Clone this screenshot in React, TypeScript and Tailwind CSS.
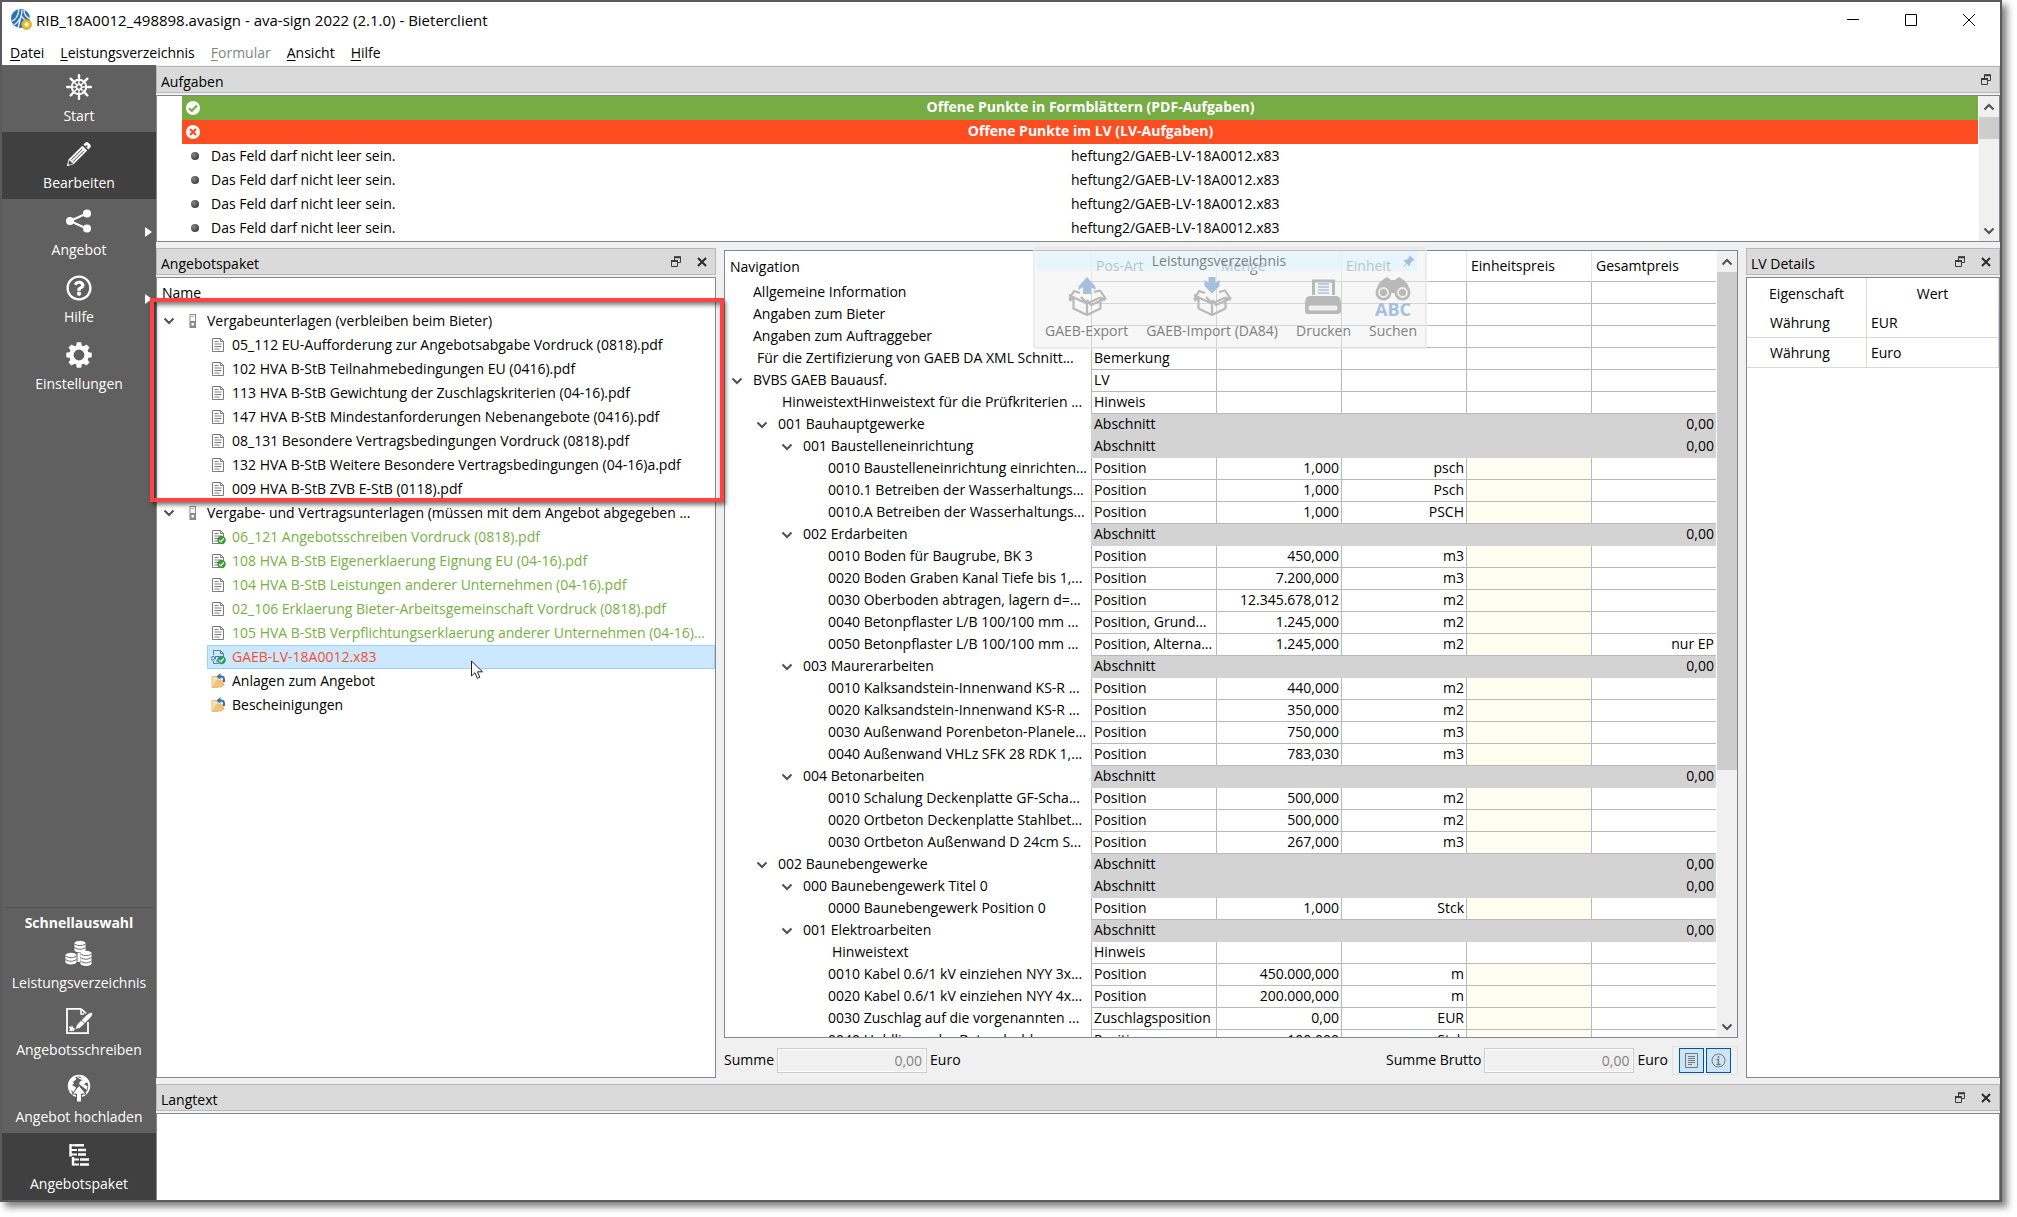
import type { ReactNode } from "react"
import { FaRegQuestionCircle } from "react-icons/fa"
import { BsPinAngleFill } from "react-icons/bs"

const ShipWheelIcon = () => (
    <svg width="26" height="26" viewBox="0 0 26 26" fill="none" stroke="white">
        <circle cx="13" cy="13" r="7.200" strokeWidth="2" />
        <circle cx="13" cy="13" r="2.600" strokeWidth="1.600" />
        {[0, 45, 90, 135, 180, 225, 270, 315].map((a) => (
            <g key={a} transform={`rotate(${a} 13 13)`}>
                <path d="M13 10.500V1" strokeWidth="1.400" />
                <path d="M13 4V1.200" strokeWidth="2.400" strokeLinecap="round" />
            </g>
        ))}
    </svg>
)

const PencilIcon = () => (
    <svg width="26" height="26" viewBox="0 0 26 26">
        <path d="M17.500 3.500l2-2q1.300-1 2.800.2l2 2q1.200 1.400 0 2.800l-2 2z" fill="white" />
        <path d="M16.300 4.700l4.900 4.900L7.500 23.200.8 25.200 2.600 18.400z" fill="white" />
        <path d="M16.300 8L5.200 19M18 9.700L6.900 20.800" stroke="#404040" strokeWidth="1" fill="none" />
        <path d="M3 19.500l1.500.4.600 1.500 1.600.3.200 1-3.600 1-.8-.8z" fill="#404040" />
        <circle cx="20.500" cy="5.200" r="1" fill="#404040" />
    </svg>
)

const ShareIcon = () => (
    <svg width="26" height="26" viewBox="0 0 26 26">
        <path d="M20.500 5.500L4 13l16.500 7.500" stroke="white" strokeWidth="2" fill="none" />
        <circle cx="4" cy="13" r="4" fill="white" />
        <circle cx="21" cy="5.500" r="4" fill="white" />
        <circle cx="21" cy="20.500" r="4" fill="white" />
    </svg>
)

const GearIcon = () => (
    <svg width="26" height="26" viewBox="0 0 26 26">
        <circle cx="13" cy="13" r="7.600" stroke="white" strokeWidth="4.400" fill="none" />
        {[0, 45, 90, 135, 180, 225, 270, 315].map((a) => (
            <path key={a} d="M10 4.500L10.800 0.300H15.200L16 4.500z" fill="white" transform={`rotate(${a} 13 13)`} />
        ))}
    </svg>
)

const CoinStack = ({ x, y, n }: { x: number; y: number; n: number }) => (
    <g>
        <rect x={x - 5.5} y={y} width="11" height={n * 3.6} fill="white" />
        <ellipse cx={x} cy={y + n * 3.6} rx="5.500" ry="2.200" fill="white" />
        <ellipse cx={x} cy={y} rx="5.500" ry="2.200" fill="white" />
        {Array.from({ length: n }, (_, i) => (
            <path key={i} d={`M${x - 5.5} ${y + i * 3.6 + 1}q5.500 3.400 11 0`} stroke="#606060" strokeWidth="0.900" fill="none" />
        ))}
    </g>
)

const CoinsIcon = () => (
    <svg width="28" height="28" viewBox="0 0 28 28">
        <CoinStack x={15} y={3} n={2} />
        <path d="M12.500 13h3v9h-3z" fill="white" />
        <CoinStack x={6} y={15} n={2} />
        <CoinStack x={21} y={13} n={3} />
    </svg>
)

const SignIcon = () => (
    <svg width="28" height="28" viewBox="0 0 28 28">
        <path d="M16 1.800H2v24.400h21V15M16 1.800l5 4.500" stroke="white" strokeWidth="1.800" fill="none" />
        <path d="M16 2v5h3" stroke="white" strokeWidth="1.500" fill="none" />
        <path d="M4.500 19.500l1.500 3 1-2.500 1.500 2.500 1-1M4.500 23.200h4.500" stroke="white" strokeWidth="1.600" fill="none" />
        <path d="M10.500 22.500q.5-5 3.500-7l8-8q2.500-2 4.500-2 1.300.5.800 2.500-.8 2-3 4l-7 7q-2.500 3-6.800 3.500z" fill="white" stroke="#606060" strokeWidth="0.600" />
        <path d="M16 13l4.500 4" stroke="#606060" strokeWidth="0.900" />
    </svg>
)

const GlobeUpIcon = () => (
    <svg width="26" height="28" viewBox="0 0 26 28">
        <circle cx="13" cy="12" r="10.300" stroke="white" strokeWidth="1.800" fill="none" />
        <path d="M11 2.500l3 1.500 2-1q5 1.500 6.500 6l-2.500-.5-2 2 3.500 1.500-.5 4-4-3-4-3 1-2.500 2.500-1.500-3-1-2-1.500zM3 12q0-6 6-9l1.500 2L7 8l1 1.500-2 1.500 4 2.500-2 4.500-3-1.500q-2-2-2-4.500z" fill="white" />
        <path d="M13 11.500l7 8.500h-4.500v8h-5v-8H6z" fill="white" stroke="#606060" strokeWidth="1" />
    </svg>
)

const TreeIcon = () => (
    <svg width="22" height="24" viewBox="0 0 22 24" stroke="white" fill="none" strokeWidth="2.600">
        <path d="M2.500 1v12.500M5 14v8.500" strokeWidth="2.400" />
        <path d="M3 2.300h4M3 11.500h6M3 7h6M5 16.500h6M5 21.500h6" strokeWidth="2" />
        <path d="M7 2.300h9M10 7h8M10 11.500h8M12 16.500h9M12 21.500h9" />
    </svg>
)

const AppLogo = () => (
    <svg width="22" height="22" viewBox="0 0 22 22">
        <circle cx="9.500" cy="9.500" r="9.500" fill="#2f6fb4" />
        <path d="M1 12Q7 10 8 0M3 16Q11 11 11 1M7 19Q9 12 10 7L18 15M13 1q0 6 6 9" stroke="#dcecf8" strokeWidth="1.400" fill="none" />
        <circle cx="15.500" cy="15.500" r="4.800" fill="#e8c02c" stroke="#c99b12" />
        <circle cx="15.500" cy="15.500" r="2" fill="#fffbe6" />
    </svg>
)

const DeviceIcon = () => (
    <svg width="8" height="14" viewBox="0 0 8 14" className="shrink-0">
        <rect x="1" y="0.500" width="5.500" height="13" fill="white" stroke="#8a8a8a" />
        <path d="M1 7h5.500v6.500H1z" fill="#8a8a8a" />
        <path d="M2 2.500h3.500" stroke="#e0b060" />
        <rect x="2.500" y="9" width="2.500" height="2.500" fill="white" />
    </svg>
)

const CheckBadge = ({ color }: { color: string }) => (
    <>
        <circle cx="10.500" cy="11" r="4.300" fill={color} />
        <path d="M8.200 11.200l1.700 1.700 2.800-3.500" stroke="white" strokeWidth="1.200" fill="none" />
    </>
)

const DocIcon = ({ checked }: { checked?: boolean }) => (
    <svg width="16" height="16" viewBox="0 0 16 16" className="shrink-0">
        <path d="M1.500 1.500h8l3 3v10h-11z" fill="white" stroke="#7c7c7c" />
        <path d="M9.500 1.500v3h3M3.500 4.500h4M3.500 7h7M3.500 9.500h7M3.500 12h5" stroke="#7c7c7c" fill="none" />
        {checked && <CheckBadge color="#3f9b35" />}
    </svg>
)

const GaebIcon = () => (
    <svg width="16" height="16" viewBox="0 0 16 16" className="shrink-0">
        <path d="M2.500 6V1.500h7l3 3V8M2.500 12v2.500h5" fill="none" stroke="#4f86ad" />
        <path d="M9.500 1.500v3h3M5 12h3M0 9.500q0-2 2-2t2 1.500-2 2-2-1.500M4.500 10V7.500h4" fill="none" stroke="#4a7496" />
        <CheckBadge color="#2f9a68" />
    </svg>
)

const FolderIcon = () => (
    <svg width="16" height="16" viewBox="0 0 16 16" className="shrink-0">
        <path d="M1 3.500h4.500L7 6v8.500H1z" fill="#f7e3b8" stroke="#dcae5c" strokeWidth="0.800" />
        <path d="M5 7h8v5.500l-2 2H1.500z" fill="#eec27a" />
        <path d="M7.500 3.500h2.500q3 0 3 3V9" fill="none" stroke="#3a6fb0" strokeWidth="2" />
        <path d="M9.500 0v7L5.500 3.500z" fill="#3a6fb0" />
    </svg>
)

const Chevron = ({ up }: { up?: boolean }) => (
    <svg width="12" height="8" viewBox="0 0 12 8" className="shrink-0">
        <path d={up ? "M1.500 6.500L6 2l4.500 4.500" : "M1.500 1.500L6 6l4.500-4.500"} stroke="#505050" strokeWidth="2" fill="none" />
    </svg>
)

const RestoreIcon = () => (
    <svg width="10" height="11" viewBox="0 0 10 11" fill="none" stroke="#3c3c3c">
        <path d="M3.500 4V1h6v5.500H7" />
        <path d="M3 1.200h7M0 5h7" strokeWidth="2" />
        <path d="M.5 5v5.500h6V5" />
    </svg>
)

const CloseIcon = () => (
    <svg width="10" height="10" viewBox="0 0 10 10">
        <path d="M1 1l8 8M9 1L1 9" stroke="#2c2c2c" strokeWidth="2" />
    </svg>
)

const BoxIcon = ({ out }: { out?: boolean }) => (
    <svg width="40" height="40" viewBox="0 0 40 40" fill="none">
        <path d="M6.500 20.500v11L20 38l13.500-6.500v-11M6.500 20.500L20 26.500l13.500-6M20 26.500V38M6.500 20.500L2.500 24M7 20l-5-2M33.500 20.500l5 2.500M20 26l-6-6M2 22.500l5-8.500 6 2M27 15l6-1.500 5.500 8L24 28l-4-5" stroke="#b9b9b9" strokeWidth="2.200" strokeLinejoin="round" />
        <path d={out ? "M20 0l8.500 9.500V13L24 10v7h-8v-7l-4.500 3V9.500z" : "M16.500 0v6l-4-3v6L20 16.500 27.500 9V3l-4 3V0z"} fill="#a5c0de" />
    </svg>
)

const PrinterIcon = () => (
    <svg width="38" height="36" viewBox="0 0 38 36">
        <path d="M9.500 16V2h20v14" stroke="#b9b9b9" strokeWidth="3" fill="#f4f4f4" />
        <path d="M14 5h11M14 8h11M14 11h11M14 14h11" stroke="#a5c0de" strokeWidth="1.600" />
        <path d="M1 24q0-7 5-7h26q5 0 5 7v8q0 3-3 3H4q-3 0-3-3z" fill="#b9b9b9" />
        <rect x="4.500" y="26.500" width="29" height="5" rx="2" fill="#efefef" />
    </svg>
)

const BinocularsIcon = () => (
    <svg width="36" height="24" viewBox="0 0 36 24">
        <path d="M1 16Q3 4 9 2l3-2 4 3h4l4-3 3 2q6 2 8 14z" fill="#b9b9b9" />
        <circle cx="8.500" cy="15.500" r="8" fill="#b9b9b9" />
        <circle cx="27.500" cy="15.500" r="8" fill="#b9b9b9" />
        <circle cx="8.500" cy="15.500" r="4.500" fill="none" stroke="#efefef" strokeWidth="1.800" />
        <circle cx="27.500" cy="15.500" r="4.500" fill="none" stroke="#efefef" strokeWidth="1.800" />
    </svg>
)

interface NavItemProps {
    icon: ReactNode
    label: string
    active?: boolean
    submenu?: boolean
}

const NavItem = ({ icon, label, active, submenu }: NavItemProps) => (
    <button className={`relative flex flex-col items-center w-full h-[67px] pt-[9px] gap-[6px] leading-5 text-white ${active ? "bg-[#404040]" : ""}`}>
        <span className="flex items-center justify-center h-[26px]">{icon}</span>
        <span>{label}</span>
        {submenu && (
            <svg width="7" height="10" viewBox="0 0 7 10" className="absolute right-1 top-7">
                <path d="M0 0l7 5-7 5z" fill="white" />
            </svg>
        )}
    </button>
)

const PanelHeader = ({ title, closable }: { title: string; closable?: boolean }) => (
    <div className="flex items-center shrink-0 h-[27px] pl-1 pr-2 gap-4 bg-[#dadada] border border-[#b8b8b8]">
        <h2 className="flex-1 pt-1 leading-5">{title}</h2>
        <button aria-label="Abdocken"><RestoreIcon /></button>
        {closable && <button aria-label="Schließen"><CloseIcon /></button>}
    </div>
)

const ScrollBar = ({ thumb }: { thumb: string }) => (
    <div className="flex flex-col items-center w-5 shrink-0 bg-[#f0f0f0]">
        <div className="flex items-center h-[21px]"><Chevron up /></div>
        <div className="flex-1 w-full">
            <div className={`w-full bg-[#cdcdcd] ${thumb}`} />
        </div>
        <div className="flex items-center h-[21px]"><Chevron /></div>
    </div>
)

const stayDocs = [
    "05_112 EU-Aufforderung zur Angebotsabgabe Vordruck (0818).pdf",
    "102 HVA B-StB Teilnahmebedingungen EU (0416).pdf",
    "113 HVA B-StB Gewichtung der Zuschlagskriterien (04-16).pdf",
    "147 HVA B-StB Mindestanforderungen Nebenangebote (0416).pdf",
    "08_131 Besondere Vertragsbedingungen Vordruck (0818).pdf",
    "132 HVA B-StB Weitere Besondere Vertragsbedingungen (04-16)a.pdf",
    "009 HVA B-StB ZVB E-StB (0118).pdf",
]

const submitDocs = [
    { name: "06_121 Angebotsschreiben Vordruck (0818).pdf", checked: true },
    { name: "108 HVA B-StB Eigenerklaerung Eignung EU (04-16).pdf", checked: true },
    { name: "104 HVA B-StB Leistungen anderer Unternehmen (04-16).pdf" },
    { name: "02_106 Erklaerung Bieter-Arbeitsgemeinschaft Vordruck (0818).pdf" },
    { name: "105 HVA B-StB Verpflichtungserklaerung anderer Unternehmen (04-16)..." },
]

const TreeGroup = ({ label }: { label: string }) => (
    <li className="flex items-center h-6 pl-[6px]">
        <Chevron />
        <span className="flex ml-[14px] mr-[10px]"><DeviceIcon /></span>
        <span className="truncate">{label}</span>
    </li>
)

const TreeLeaf = ({ icon, label, color }: { icon: ReactNode; label: string; color?: string }) => (
    <li className={`flex items-center h-6 ml-[50px] pl-1 gap-[5px] ${color || ""}`}>
        {icon}
        <span className="whitespace-nowrap">{label}</span>
    </li>
)

type Row = {
    indent: string
    name: string
    open?: boolean
    type?: string
    qty?: string
    unit?: string
    total?: string
}

const root = "pl-7"
const lv1 = "pl-[53px]"
const lv2 = "pl-[78px]"
const lv3 = "pl-[103px]"

const rows: Row[] = [
    { indent: root, name: "Allgemeine Information" },
    { indent: root, name: "Angaben zum Bieter" },
    { indent: root, name: "Angaben zum Auftraggeber" },
    { indent: "pl-8", name: "Für die Zertifizierung von GAEB DA XML Schnitt...", type: "Bemerkung" },
    { indent: root, name: "BVBS GAEB Bauausf.", open: true, type: "LV" },
    { indent: "pl-[57px]", name: "HinweistextHinweistext für die Prüfkriterien ...", type: "Hinweis" },
    { indent: lv1, name: "001 Bauhauptgewerke", open: true, type: "Abschnitt", total: "0,00" },
    { indent: lv2, name: "001 Baustelleneinrichtung", open: true, type: "Abschnitt", total: "0,00" },
    { indent: lv3, name: "0010 Baustelleneinrichtung einrichten...", type: "Position", qty: "1,000", unit: "psch" },
    { indent: lv3, name: "0010.1 Betreiben der Wasserhaltungs...", type: "Position", qty: "1,000", unit: "Psch" },
    { indent: lv3, name: "0010.A Betreiben der Wasserhaltungs...", type: "Position", qty: "1,000", unit: "PSCH" },
    { indent: lv2, name: "002 Erdarbeiten", open: true, type: "Abschnitt", total: "0,00" },
    { indent: lv3, name: "0010 Boden für Baugrube, BK 3", type: "Position", qty: "450,000", unit: "m3" },
    { indent: lv3, name: "0020 Boden Graben Kanal Tiefe bis 1,...", type: "Position", qty: "7.200,000", unit: "m3" },
    { indent: lv3, name: "0030 Oberboden abtragen, lagern d=...", type: "Position", qty: "12.345.678,012", unit: "m2" },
    { indent: lv3, name: "0040 Betonpflaster L/B 100/100 mm ...", type: "Position, Grund...", qty: "1.245,000", unit: "m2" },
    { indent: lv3, name: "0050 Betonpflaster L/B 100/100 mm ...", type: "Position, Alterna...", qty: "1.245,000", unit: "m2", total: "nur EP" },
    { indent: lv2, name: "003 Maurerarbeiten", open: true, type: "Abschnitt", total: "0,00" },
    { indent: lv3, name: "0010 Kalksandstein-Innenwand KS-R ...", type: "Position", qty: "440,000", unit: "m2" },
    { indent: lv3, name: "0020 Kalksandstein-Innenwand KS-R ...", type: "Position", qty: "350,000", unit: "m2" },
    { indent: lv3, name: "0030 Außenwand Porenbeton-Planele...", type: "Position", qty: "750,000", unit: "m3" },
    { indent: lv3, name: "0040 Außenwand VHLz SFK 28 RDK 1,...", type: "Position", qty: "783,030", unit: "m3" },
    { indent: lv2, name: "004 Betonarbeiten", open: true, type: "Abschnitt", total: "0,00" },
    { indent: lv3, name: "0010 Schalung Deckenplatte GF-Scha...", type: "Position", qty: "500,000", unit: "m2" },
    { indent: lv3, name: "0020 Ortbeton Deckenplatte Stahlbet...", type: "Position", qty: "500,000", unit: "m2" },
    { indent: lv3, name: "0030 Ortbeton Außenwand D 24cm S...", type: "Position", qty: "267,000", unit: "m3" },
    { indent: lv1, name: "002 Baunebengewerke", open: true, type: "Abschnitt", total: "0,00" },
    { indent: lv2, name: "000 Baunebengewerk Titel 0", open: true, type: "Abschnitt", total: "0,00" },
    { indent: lv3, name: "0000 Baunebengewerk Position 0", type: "Position", qty: "1,000", unit: "Stck" },
    { indent: lv2, name: "001 Elektroarbeiten", open: true, type: "Abschnitt", total: "0,00" },
    { indent: "pl-[107px]", name: "Hinweistext", type: "Hinweis" },
    { indent: lv3, name: "0010 Kabel 0.6/1 kV einziehen NYY 3x...", type: "Position", qty: "450.000,000", unit: "m" },
    { indent: lv3, name: "0020 Kabel 0.6/1 kV einziehen NYY 4x...", type: "Position", qty: "200.000,000", unit: "m" },
    { indent: lv3, name: "0030 Zuschlag auf die vorgenannten ...", type: "Zuschlagsposition", qty: "0,00", unit: "EUR" },
    { indent: lv3, name: "0040 Hohlliegender Betondachl...", type: "Position", qty: "100,000", unit: "Stck" },
]

const columns = ["Pos-Art", "Menge", "Einheit", "Einheitspreis", "Gesamtpreis"]

const LvRow = ({ row }: { row: Row }) => {
    const section = row.type === "Abschnitt"
    const cell = `h-[22px] p-0 px-[2px] border-l border-b whitespace-nowrap overflow-hidden ${section ? "bg-[#d3d3d3] border-[#d3d3d3]" : "border-[#b9b9b9]"}`
    return (
        <tr className="align-top leading-[19px]">
            <td className={`h-[22px] p-0 whitespace-nowrap overflow-hidden ${row.indent}`}>
                {row.open && <span className="inline-flex -ml-[22px] mr-[10px] align-middle"><Chevron /></span>}
                {row.name}
            </td>
            <td className={cell}>{row.type}</td>
            <td className={`${cell} text-right`}>{row.qty}</td>
            <td className={`${cell} text-right`}>{row.unit}</td>
            <td className={`${cell} ${row.qty ? "bg-[#fffdf0]" : ""}`}></td>
            <td className={`${cell} text-right`}>{row.total}</td>
        </tr>
    )
}

const QuickToolbar = () => (
    <div className="absolute right-[310px] -top-1 w-[394px] h-[102px] p-[2px] rounded border-2 border-[#e4e4e4]/60 bg-[#f0f0f0]/50 text-[#808080]">
        <div className="relative h-5 pr-4 mr-[6px] text-center leading-5 bg-[#ddf4ff]/60">
            Leistungsverzeichnis
            <BsPinAngleFill size={13} color="#a5c0de" className="absolute right-[2px] top-1" />
        </div>
        <div className="flex justify-between pl-2 pr-[6px] pt-[6px]">
            <button className="flex flex-col items-center"><BoxIcon out /><span className="pt-1 leading-5">GAEB-Export</span></button>
            <button className="flex flex-col items-center"><BoxIcon /><span className="pt-1 leading-5">GAEB-Import (DA84)</span></button>
            <button className="flex flex-col items-center"><span className="h-10 pt-[2px]"><PrinterIcon /></span><span className="pt-1 leading-5">Drucken</span></button>
            <button className="flex flex-col items-center">
                <span className="flex flex-col items-center h-10">
                    <BinocularsIcon />
                    <b className="text-lg leading-4 text-[#a5c0de]">ABC</b>
                </span>
                <span className="pt-1 leading-5">Suchen</span>
            </button>
        </div>
    </div>
)

const SumField = ({ id, label }: { id: string; label: string }) => (
    <div className="flex items-center gap-[3px]">
        <label htmlFor={id}>{label}</label>
        <input id={id} disabled value="0,00" className="w-[150px] h-[25px] px-1 border border-[#cccccc] bg-[#f0f0f0] text-right text-[#838383] shadow-[inset_0_0_0_1px_#fff]" />
        <span>Euro</span>
    </div>
)

const Sidebar = () => (
    <nav className="flex flex-col justify-between w-[154px] shrink-0 bg-[#606060]">
        <div>
            <NavItem icon={<ShipWheelIcon />} label="Start" />
            <NavItem icon={<PencilIcon />} label="Bearbeiten" active />
            <NavItem icon={<ShareIcon />} label="Angebot" submenu />
            <NavItem icon={<FaRegQuestionCircle size={26} />} label="Hilfe" submenu />
            <NavItem icon={<GearIcon />} label="Einstellungen" />
        </div>
        <div>
            <div className="mx-[3px] border-t border-[#505050]" />
            <h3 className="h-6 pt-1 text-center font-bold leading-[22px] text-white">Schnellauswahl</h3>
            <NavItem icon={<CoinsIcon />} label="Leistungsverzeichnis" />
            <NavItem icon={<SignIcon />} label="Angebotsschreiben" />
            <NavItem icon={<GlobeUpIcon />} label="Angebot hochladen" />
            <NavItem icon={<TreeIcon />} label="Angebotspaket" active />
        </div>
    </nav>
)

const Tasks = () => (
    <section className="flex flex-col gap-[2px]">
        <PanelHeader title="Aufgaben" />
        <div className="flex h-[147px] border border-[#828790] bg-white">
            <div className="flex-1 pl-[25px] pr-px">
                <div className="relative h-6 pl-[21px] leading-[22px] bg-[#76ac43] text-white text-center font-bold">
                    <svg width="14" height="14" viewBox="0 0 14 14" className="absolute left-1 top-[5px]">
                        <circle cx="7" cy="7" r="7" fill="white" />
                        <path d="M3 7.200l2.800 2.600L11 4.500" stroke="#76ac43" strokeWidth="2.200" fill="none" />
                    </svg>
                    Offene Punkte in Formblättern (PDF-Aufgaben)
                </div>
                <div className="relative h-6 pl-[21px] leading-[22px] bg-[#ff4d22] text-white text-center font-bold">
                    <svg width="14" height="14" viewBox="0 0 14 14" className="absolute left-1 top-[5px]">
                        <circle cx="7" cy="7" r="7" fill="white" />
                        <path d="M4 4l6 6M10 4l-6 6" stroke="#ff4d22" strokeWidth="2.200" />
                    </svg>
                    Offene Punkte im LV (LV-Aufgaben)
                </div>
                <ul>
                    {[1, 2, 3, 4].map((n) => (
                        <li key={n} className="grid grid-cols-2 h-6 items-center">
                            <span className="flex items-center gap-3 pl-[9px]">
                                <span className="size-2 rounded-full bg-radial-[at_35%_35%] from-[#888] to-[#222]" />
                                Das Feld darf nicht leer sein.
                            </span>
                            <span className="-ml-[9px]">heftung2/GAEB-LV-18A0012.x83</span>
                        </li>
                    ))}
                </ul>
            </div>
            <ScrollBar thumb="h-[22px]" />
        </div>
    </section>
)

const PackagePanel = () => (
    <section className="relative flex flex-col gap-[2px] w-[560px] shrink-0">
        <PanelHeader title="Angebotspaket" closable />
        <div className="flex-1 border border-[#828790] bg-white">
            <div className="h-[31px] pl-[5px] pt-[5px] leading-5">Name</div>
            <ul>
                <TreeGroup label="Vergabeunterlagen (verbleiben beim Bieter)" />
                {stayDocs.map((name) => <TreeLeaf key={name} icon={<DocIcon />} label={name} />)}
                <TreeGroup label="Vergabe- und Vertragsunterlagen (müssen mit dem Angebot abgegeben ..." />
                {submitDocs.map((doc) => (
                    <TreeLeaf key={doc.name} icon={<DocIcon checked={doc.checked} />} label={doc.name} color="text-[#76b043]" />
                ))}
                <TreeLeaf icon={<GaebIcon />} label="GAEB-LV-18A0012.x83" color="text-[#f4502c] bg-[#cce8ff] outline outline-[#99d1ff] -outline-offset-1" />
                <TreeLeaf icon={<FolderIcon />} label="Anlagen zum Angebot" />
                <TreeLeaf icon={<FolderIcon />} label="Bescheinigungen" />
            </ul>
        </div>
        <div className="absolute z-10 -left-[6px] -right-2 top-[50px] h-[204px] border-4 border-[#ff4343] shadow-[2px_3px_4px_rgba(0,0,0,0.5),inset_2px_3px_4px_rgba(0,0,0,0.5)]" />
        <svg width="13" height="20" viewBox="0 0 13 20" className="absolute z-10 left-[315px] top-[412px]">
            <path d="M.5 1v15l3.500-3.300 2.300 5.600 2.500-1-2.300-5.500h5z" fill="white" stroke="#222" />
        </svg>
    </section>
)

const LvPanel = () => (
    <section className="relative flex flex-col flex-1 min-w-0 pt-[2px]">
        <div className="relative flex flex-1 min-h-0 border border-[#828790] bg-white">
            <div className="flex-1 min-w-0 overflow-hidden pr-px">
                <div className="h-0">
                    <table className="w-full table-fixed border-separate border-spacing-0">
                        <thead>
                            <tr className="text-left leading-5">
                                <th className="h-[31px] p-0 font-normal pl-[5px]">Navigation</th>
                                {columns.map((c) => (
                                    <th key={c} className="w-[125px] h-[31px] p-0 pl-1 font-normal border-l border-l-[#e5e5e5] border-b border-b-[#b9b9b9]">{c}</th>
                                ))}
                            </tr>
                        </thead>
                        <tbody>
                            {rows.map((row, i) => <LvRow key={i} row={row} />)}
                        </tbody>
                    </table>
                </div>
            </div>
            <ScrollBar thumb="h-[67%]" />
            <QuickToolbar />
        </div>
        <div className="flex items-center justify-between h-10 pb-1 pt-2">
            <SumField id="summe" label="Summe" />
            <div className="flex items-center gap-1">
                <SumField id="brutto" label="Summe Brutto" />
                <div className="flex items-center gap-[2px] h-[29px] px-[6px] border border-[#e2e2e2]">
                    <button aria-label="Langtext" className="flex items-center justify-center size-[25px] border border-[#005499] bg-[#cce4f7]">
                        <svg width="13" height="15" viewBox="0 0 13 15" fill="none" stroke="#777">
                            <path d="M.5.5h12v14H.5z" />
                            <path d="M3 3.500h7M3 5.500h7M3 7.500h7M3 9.500h7M3 11.500h4" />
                        </svg>
                    </button>
                    <button aria-label="Details" className="flex items-center justify-center size-[25px] border border-[#005499] bg-[#cce4f7]">
                        <svg width="15" height="15" viewBox="0 0 15 15" fill="none" stroke="#777">
                            <circle cx="7.500" cy="7.500" r="6.500" />
                            <path d="M7.500 3v2M5.500 6.500h2v5M5.500 11.500h4" strokeWidth="1.400" />
                        </svg>
                    </button>
                </div>
            </div>
        </div>
    </section>
)

const DetailsPanel = () => (
    <section className="flex flex-col gap-[2px] w-[254px] shrink-0">
        <PanelHeader title="LV Details" closable />
        <div className="flex-1 border border-[#828790] bg-white">
            <table className="w-full table-fixed border-separate border-spacing-0">
                <thead>
                    <tr>
                        <th className="w-[120px] h-[30px] p-0 pt-[2px] font-normal border-r border-[#dcdcdc]">Eigenschaft</th>
                        <th className="p-0 pt-[2px] font-normal border-r border-[#dcdcdc]">Wert</th>
                    </tr>
                </thead>
                <tbody>
                    {["EUR", "Euro"].map((value) => (
                        <tr key={value}>
                            <td className="h-[30px] p-0 pl-[23px] border-r border-b border-[#d8d8d8]">Währung</td>
                            <td className="p-0 pl-1 border-r border-b border-[#d8d8d8]">{value}</td>
                        </tr>
                    ))}
                </tbody>
            </table>
        </div>
    </section>
)

const menu = [
    { key: "D", rest: "atei" },
    { key: "L", rest: "eistungsverzeichnis" },
    { key: "F", rest: "ormular", disabled: true },
    { key: "A", rest: "nsicht" },
    { key: "H", rest: "ilfe" },
]

export default function App() {
    return (
        <div className="h-screen pr-[15px] pb-[15px] bg-white text-[14px] leading-6 text-black font-['Open_Sans',sans-serif]">
            <div className="flex flex-col h-full border-2 border-[#5a5a5c] bg-white shadow-[5px_5px_7px_rgba(0,0,0,0.5)]">
                <header className="flex items-center h-9 shrink-0 pl-[9px] pr-[2px]">
                    <AppLogo />
                    <h1 className="flex-1 pl-[3px] text-[15px]">RIB_18A0012_498898.avasign - ava-sign 2022 (2.1.0) - Bieterclient</h1>
                    <button aria-label="Minimieren" className="flex justify-center w-[58px]">
                        <svg width="12" height="12" viewBox="0 0 12 12"><path d="M0 5.500h12" stroke="black" /></svg>
                    </button>
                    <button aria-label="Maximieren" className="flex justify-center w-[58px]">
                        <svg width="12" height="12" viewBox="0 0 12 12"><path d="M.5.5h11v11H.5z" stroke="black" fill="none" /></svg>
                    </button>
                    <button aria-label="Beenden" className="flex justify-center w-[58px]">
                        <svg width="12" height="12" viewBox="0 0 12 12"><path d="M0 0l12 12M12 0L0 12" stroke="black" /></svg>
                    </button>
                </header>
                <div className="flex items-center h-[27px] shrink-0 pl-2 pt-[2px] gap-4">
                    {menu.map((m) => (
                        <button key={m.key} disabled={m.disabled} className={m.disabled ? "text-[#838383]" : ""}>
                            <u className="underline-offset-2">{m.key}</u>{m.rest}
                        </button>
                    ))}
                </div>
                <div className="flex flex-1 min-h-0">
                    <Sidebar />
                    <main className="flex flex-col flex-1 min-w-0 gap-[6px] pt-px bg-[#f0f0f0]">
                        <Tasks />
                        <div className="flex flex-1 min-h-0 gap-2">
                            <PackagePanel />
                            <LvPanel />
                            <DetailsPanel />
                        </div>
                        <section className="flex flex-col gap-[2px]">
                            <PanelHeader title="Langtext" closable />
                            <div className="h-[87px] border border-b-0 border-[#828790] bg-white" />
                        </section>
                    </main>
                </div>
            </div>
        </div>
    )
}
